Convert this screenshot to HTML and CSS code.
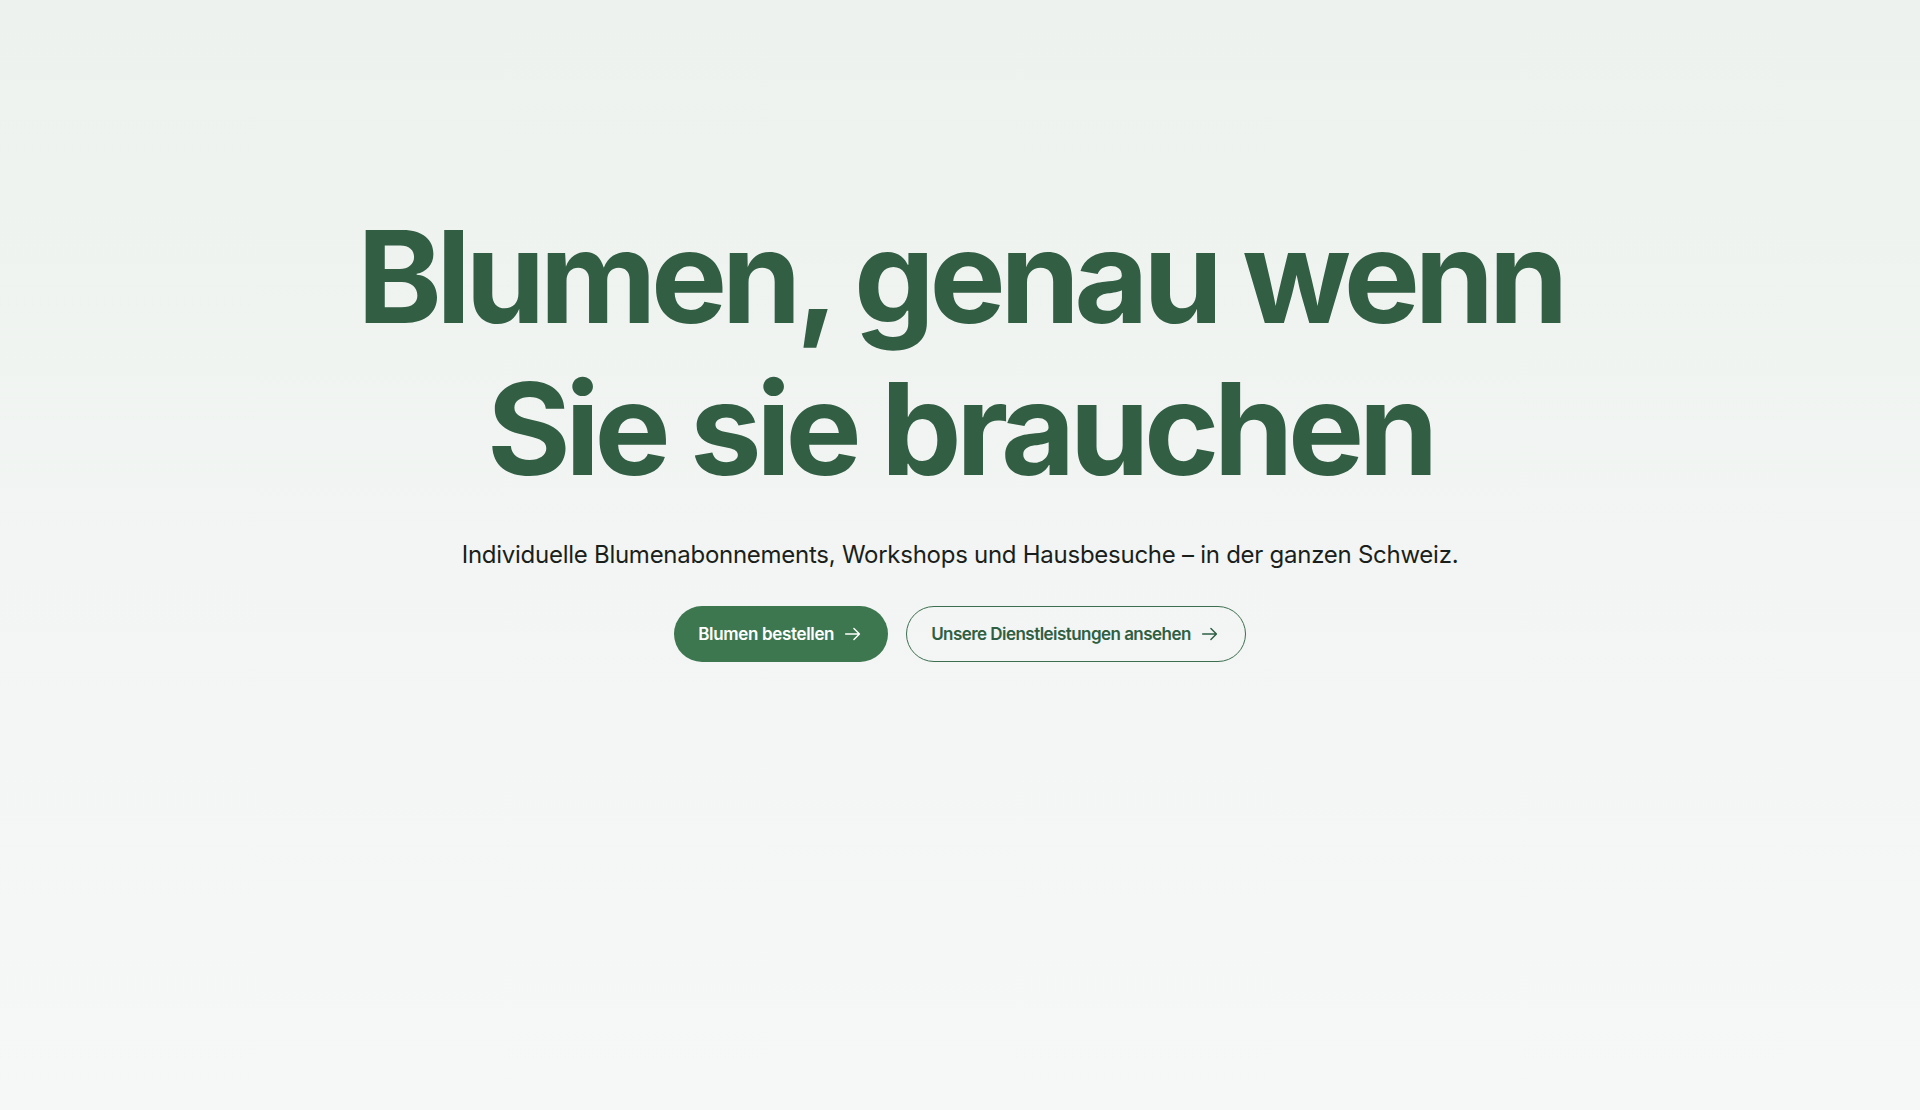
FILE: index.html
```html
<!DOCTYPE html>
<html lang="de">
<head>
<meta charset="utf-8">
<title>Blumen</title>
<link rel="stylesheet" href="styles.css">
</head>
<body>
<main class="hero">
  <h1 class="hero-title">Blumen, genau wenn<br>Sie sie brauchen</h1>
  <p class="hero-sub">Individuelle Blumenabonnements, Workshops und Hausbesuche – in der ganzen Schweiz.</p>
  <div class="hero-actions">
    <a class="btn btn-primary" href="#">Blumen bestellen
      <svg class="arrow" viewBox="0 0 24 24" width="22" height="22"><path d="M4 12h15M13 6l6 6-6 6" fill="none" stroke="currentColor" stroke-width="1.6" stroke-linecap="round" stroke-linejoin="round"/></svg>
    </a>
    <a class="btn btn-outline" href="#">Unsere Dienstleistungen ansehen
      <svg class="arrow" viewBox="0 0 24 24" width="22" height="22"><path d="M4 12h15M13 6l6 6-6 6" fill="none" stroke="currentColor" stroke-width="1.6" stroke-linecap="round" stroke-linejoin="round"/></svg>
    </a>
  </div>
</main>
</body>
</html>
```
FILE: styles.css
```css
html, body {
  margin: 0;
  padding: 0;
}
body {
  min-height: 1110px;
  background: linear-gradient(180deg, #edf2ee 0%, #f2f5f3 50%, #f6f8f7 100%);
  font-family: Inter, "Noto Sans", sans-serif;
}
.hero {
  display: flex;
  flex-direction: column;
  align-items: center;
  padding-top: 201px;
}
.hero-title {
  margin: 0;
  font-size: 128px;
  line-height: 152px;
  font-weight: 700;
  letter-spacing: -0.043em;
  color: #325e44;
  text-align: center;
}
.hero-sub {
  margin: 34px 0 0;
  font-size: 24px;
  line-height: 32px;
  font-weight: 400;
  color: #1b1f1c;
  letter-spacing: -0.011em;
}
.hero-actions {
  display: flex;
  gap: 18px;
  margin-top: 35px;
}
.btn {
  display: inline-flex;
  align-items: center;
  gap: 8px;
  height: 56px;
  box-sizing: border-box;
  padding: 0 24px;
  border-radius: 28px;
  font-size: 17px;
  font-weight: 600;
  letter-spacing: -0.02em;
  text-decoration: none;
}
.btn-primary {
  background: #3d774f;
  color: #ffffff;
}
.btn-outline {
  border: 1.5px solid #3d6e50;
  color: #2f5f43;
  background: transparent;
  letter-spacing: -0.032em;
}
.arrow {
  flex: none;
}
```
